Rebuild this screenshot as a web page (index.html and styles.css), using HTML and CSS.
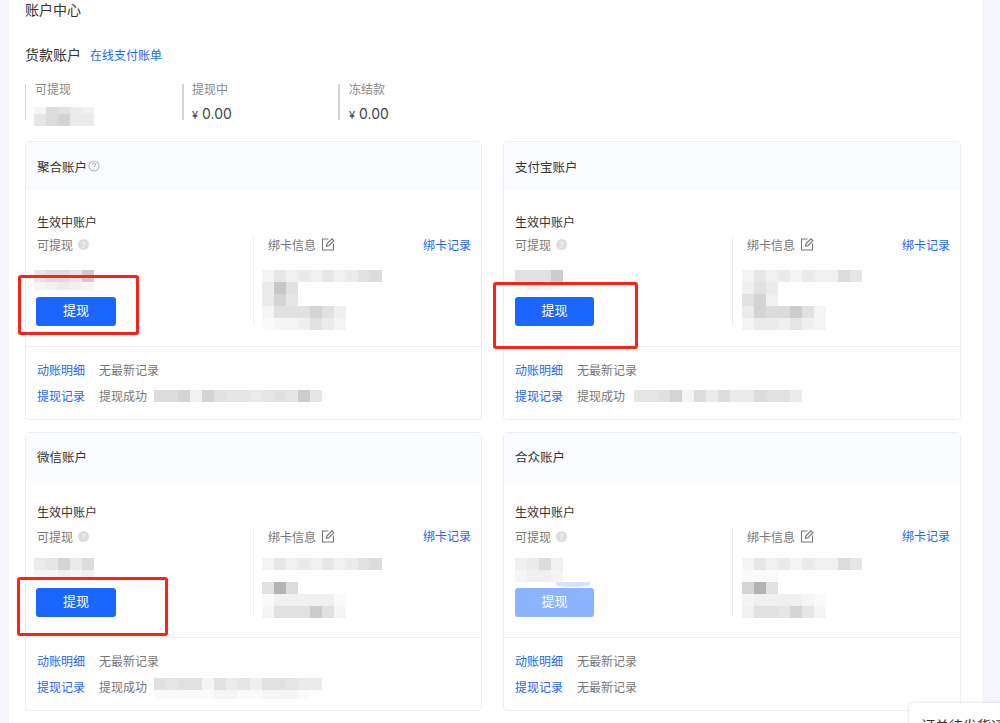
FILE: index.html
```html
<!DOCTYPE html>
<html lang="zh-CN">
<head>
<meta charset="utf-8">
<title>账户中心</title>
<link rel="stylesheet" href="styles.css">
</head>
<body>
<main class="page">
  <h1 class="page-title">账户中心</h1>
  <div class="section-head"><span class="section-title">货款账户</span><a class="link">在线支付账单</a></div>
  <div class="summary">
    <div class="stat stat-first"><div class="stat-label">可提现</div><div class="mosaic stat-mosaic"><div class="row r7"><i class="g1"></i><i class="g6"></i><i class="g5"></i><i class="g3"></i><i class="g2"></i></div><div class="row r12"><i class="g4"></i><i class="g6"></i><i class="g7"></i><i class="g3"></i><i class="g3"></i></div></div></div>
    <div class="stat stat-second"><div class="stat-label">提现中</div><div class="stat-value"><small>¥</small> 0.00</div></div>
    <div class="stat stat-third"><div class="stat-label">冻结款</div><div class="stat-value"><small>¥</small> 0.00</div></div>
  </div>
  <div class="cards">
    <section class="card">
      <header class="card-head">聚合账户<svg class="help-outline" viewBox="0 0 12 12"><circle cx="6" cy="6" r="5" /><path d="M4.4 4.7a1.6 1.6 0 1 1 2.4 1.4c-.5.3-.8.6-.8 1.2M6 8.4v1" /></svg></header>
      <div class="card-body">
        <div class="card-sub">生效中账户</div>
        <div class="card-cols">
          <div class="col-left">
            <div class="label-row">可提现<span class="help-dot">?</span></div>
            <div class="mosaic amount"><div class="row r12"><i class="g4"></i><i class="g6"></i><i class="g6"></i><i class="g4"></i><i class="g8"></i></div><div class="row r8"><i class="g1"></i><i class="g2"></i><i class="g3"></i><i class="g2"></i><i class="g1"></i></div></div>
            <button class="btn">提现</button>
          </div>
          <div class="col-right">
            <div class="bank-head"><span class="label-row">绑卡信息<svg class="edit" viewBox="0 0 14 14"><path d="M7.5 2H1.5v11h11V6.5M5.5 9.2l.5-2.4L11 1.8l1.9 1.9-5 5z"/></svg></span><a class="link">绑卡记录</a></div>
            <div class="mosaic bank">
              <div class="row r12"><i class="g1"></i><i class="g4"></i><i class="g2"></i><i class="g3"></i><i class="g2"></i><i class="g4"></i><i class="g2"></i><i class="g3"></i><i class="g5"></i><i class="g6"></i></div>
              <div class="row r12"><i class="g3"></i><i class="g9"></i><i class="g5"></i></div>
              <div class="row r12"><i class="g3"></i><i class="g7"></i><i class="g4"></i></div>
              <div class="row r12"><i class="g1"></i><i class="g5"></i><i class="g5"></i><i class="g5"></i><i class="g7"></i><i class="g5"></i><i class="g2"></i></div>
              <div class="row r12"><i class="g0"></i><i class="g1"></i><i class="g1"></i><i class="g2"></i><i class="g5"></i><i class="g3"></i><i class="g1"></i></div>
            </div>
          </div>
        </div>
      </div>
      <footer class="card-foot">
        <div class="foot-row"><a class="link">动账明细</a><span>无最新记录</span></div>
        <div class="foot-row"><a class="link">提现记录</a><span>提现成功</span><div class="mosaic foot-mosaic"><div class="row r12"><i class="g6"></i><i class="g6"></i><i class="g7"></i><i class="g2"></i><i class="g7"></i><i class="g5"></i><i class="g4"></i><i class="g4"></i><i class="g3"></i><i class="g4"></i><i class="g5"></i><i class="g4"></i><i class="g8"></i><i class="g4"></i></div></div></div>
      </footer>
    </section>
    <section class="card">
      <header class="card-head">支付宝账户</header>
      <div class="card-body">
        <div class="card-sub">生效中账户</div>
        <div class="card-cols">
          <div class="col-left">
            <div class="label-row">可提现<span class="help-dot">?</span></div>
            <div class="mosaic amount"><div class="row r12"><i class="g5"></i><i class="g5"></i><i class="g5"></i><i class="g8"></i></div><div class="row r8"><i class="n"></i><i class="g2"></i><i class="g1"></i><i class="g0"></i></div></div>
            <button class="btn">提现</button>
          </div>
          <div class="col-right">
            <div class="bank-head"><span class="label-row">绑卡信息<svg class="edit" viewBox="0 0 14 14"><path d="M7.5 2H1.5v11h11V6.5M5.5 9.2l.5-2.4L11 1.8l1.9 1.9-5 5z"/></svg></span><a class="link">绑卡记录</a></div>
            <div class="mosaic bank">
              <div class="row r12"><i class="g1"></i><i class="g4"></i><i class="g2"></i><i class="g3"></i><i class="g1"></i><i class="g3"></i><i class="g2"></i><i class="g2"></i><i class="g6"></i><i class="g4"></i></div>
              <div class="row r12"><i class="g2"></i><i class="g5"></i><i class="g3"></i></div>
              <div class="row r12"><i class="g5"></i><i class="g7"></i><i class="g2"></i></div>
              <div class="row r12"><i class="g3"></i><i class="g7"></i><i class="g6"></i><i class="g6"></i><i class="g8"></i><i class="g5"></i><i class="g1"></i></div>
              <div class="row r12"><i class="g1"></i><i class="g3"></i><i class="g3"></i><i class="g2"></i><i class="g4"></i><i class="g2"></i><i class="g1"></i></div>
            </div>
          </div>
        </div>
      </div>
      <footer class="card-foot">
        <div class="foot-row"><a class="link">动账明细</a><span>无最新记录</span></div>
        <div class="foot-row"><a class="link">提现记录</a><span>提现成功</span><div class="mosaic foot-mosaic"><div class="row r12"><i class="g4"></i><i class="g4"></i><i class="g5"></i><i class="g7"></i><i class="g1"></i><i class="g6"></i><i class="g3"></i><i class="g6"></i><i class="g3"></i><i class="g3"></i><i class="g6"></i><i class="g5"></i><i class="g5"></i><i class="g3"></i></div></div></div>
      </footer>
    </section>
    <section class="card">
      <header class="card-head">微信账户</header>
      <div class="card-body">
        <div class="card-sub">生效中账户</div>
        <div class="card-cols">
          <div class="col-left">
            <div class="label-row">可提现<span class="help-dot">?</span></div>
            <div class="mosaic amount amount-up"><div class="row r12"><i class="g3"></i><i class="g4"></i><i class="g7"></i><i class="g3"></i><i class="g6"></i></div><div class="row r8"><i class="g1"></i><i class="g1"></i><i class="g2"></i><i class="g1"></i><i class="g2"></i></div></div>
            <button class="btn">提现</button>
          </div>
          <div class="col-right">
            <div class="bank-head"><span class="label-row">绑卡信息<svg class="edit" viewBox="0 0 14 14"><path d="M7.5 2H1.5v11h11V6.5M5.5 9.2l.5-2.4L11 1.8l1.9 1.9-5 5z"/></svg></span><a class="link">绑卡记录</a></div>
            <div class="mosaic bank bank-up">
              <div class="row r12"><i class="g1"></i><i class="g4"></i><i class="g2"></i><i class="g3"></i><i class="g2"></i><i class="g4"></i><i class="g2"></i><i class="g3"></i><i class="g5"></i><i class="g6"></i></div>
              <div class="row r12"><i class="n"></i></div>
              <div class="row r12"><i class="g5"></i><i class="g10"></i><i class="g6"></i></div>
              <div class="row r12"><i class="g0"></i><i class="g2"></i><i class="g2"></i><i class="g2"></i><i class="g2"></i><i class="g2"></i><i class="g0"></i></div>
              <div class="row r12"><i class="g1"></i><i class="g5"></i><i class="g5"></i><i class="g5"></i><i class="g8"></i><i class="g5"></i><i class="g1"></i></div>
            </div>
          </div>
        </div>
      </div>
      <footer class="card-foot">
        <div class="foot-row"><a class="link">动账明细</a><span>无最新记录</span></div>
        <div class="foot-row"><a class="link">提现记录</a><span>提现成功</span><div class="mosaic foot-mosaic foot-tall"><div class="row r12"><i class="g5"></i><i class="g4"></i><i class="g5"></i><i class="g5"></i><i class="g1"></i><i class="g5"></i><i class="g3"></i><i class="g4"></i><i class="g2"></i><i class="g5"></i><i class="g5"></i><i class="g4"></i><i class="g3"></i><i class="g3"></i></div><div class="row r9"><i class="g0"></i><i class="g0"></i><i class="g0"></i><i class="g0"></i><i class="g0"></i><i class="g1"></i><i class="g1"></i><i class="g0"></i><i class="g0"></i><i class="g1"></i><i class="g1"></i><i class="g1"></i><i class="g0"></i></div></div></div>
      </footer>
    </section>
    <section class="card">
      <header class="card-head">合众账户</header>
      <div class="card-body">
        <div class="card-sub">生效中账户</div>
        <div class="card-cols">
          <div class="col-left">
            <div class="label-row">可提现<span class="help-dot">?</span></div>
            <div class="mosaic amount amount-up amount-smear"><div class="row r12"><i class="g2"></i><i class="g3"></i><i class="g6"></i><i class="g2"></i></div><div class="row r12"><i class="g1"></i><i class="g2"></i><i class="g2"></i><i class="g1"></i></div></div>
            <button class="btn btn-disabled">提现</button>
          </div>
          <div class="col-right">
            <div class="bank-head"><span class="label-row">绑卡信息<svg class="edit" viewBox="0 0 14 14"><path d="M7.5 2H1.5v11h11V6.5M5.5 9.2l.5-2.4L11 1.8l1.9 1.9-5 5z"/></svg></span><a class="link">绑卡记录</a></div>
            <div class="mosaic bank bank-up">
              <div class="row r12"><i class="g1"></i><i class="g4"></i><i class="g2"></i><i class="g3"></i><i class="g1"></i><i class="g3"></i><i class="g2"></i><i class="g2"></i><i class="g6"></i><i class="g4"></i></div>
              <div class="row r12"><i class="g0"></i><i class="g0"></i><i class="g0"></i></div>
              <div class="row r12"><i class="g7"></i><i class="g10"></i><i class="g5"></i></div>
              <div class="row r12"><i class="g1"></i><i class="g2"></i><i class="g2"></i><i class="g2"></i><i class="g2"></i><i class="g1"></i><i class="g0"></i></div>
              <div class="row r12"><i class="g2"></i><i class="g5"></i><i class="g5"></i><i class="g4"></i><i class="g7"></i><i class="g4"></i><i class="g1"></i></div>
            </div>
          </div>
        </div>
      </div>
      <footer class="card-foot">
        <div class="foot-row"><a class="link">动账明细</a><span>无最新记录</span></div>
        <div class="foot-row"><a class="link">提现记录</a><span>无最新记录</span></div>
      </footer>
    </section>
  </div>
</main>
<div class="note note-a"></div>
<div class="note note-b"></div>
<div class="note note-c"></div>
<aside class="toast">订单待发货通知</aside>
</body>
</html>
```

FILE: styles.css
```css
* { box-sizing: border-box; }
html, body { margin: 0; height: 723px; overflow: hidden; }
body {
  position: relative;
  background: #f5f6fb;
  font-family: "Noto Sans CJK SC", "Liberation Sans", sans-serif;
  font-size: 12px;
  color: #666;
}
.page {
  margin-left: 9px;
  width: 973px;
  height: 723px;
  background: #fff;
  padding: 0 21px 0 16px;
  overflow: hidden;
}
.page-title {
  margin: 0;
  height: 18px;
  font-size: 14px;
  line-height: 18px;
  font-weight: 400;
  color: #333;
}
.section-head {
  display: flex;
  align-items: center;
  gap: 9px;
  margin-top: 25px;
  height: 22px;
}
.section-title { font-size: 14px; color: #333; }
.link { color: #1a66ff; font-size: 12px; }
.summary { display: flex; margin-top: 19px; height: 36px; }
.stat {
  width: 157px;
  padding-left: 8px;
  border-left: 2px solid #d4d4d4;
  line-height: 18px;
}
.stat-first { border-left: 1px solid #d8d8d8; padding-left: 9px; }
.stat-second { width: 156px; }
.stat-third { padding-left: 9px; }
.stat-label { color: #888; height: 18px; margin-top: -4px; }
.stat-value { font-size: 14px; line-height: 22px; color: #444; font-family: "Inter", "Liberation Sans", sans-serif; margin-top: 5px; }
.stat-value small { font-size: 11px; }
.cards {
  display: grid;
  grid-template-columns: 457px 458px;
  column-gap: 21px;
  row-gap: 12px;
  margin-top: 21px;
}
.card {
  height: 279px;
  border: 1px solid #eceef3;
  border-radius: 4px;
  background: #fff;
  display: flex;
  flex-direction: column;
}
.card-head {
  display: flex;
  align-items: center;
  height: 48px;
  padding-left: 11px;
  background: #fafbfe;
  font-size: 12.5px;
  color: #333;
}
.card:nth-child(n+3) .card-head { padding-bottom: 2px; }
.help-outline { width: 12px; height: 12px; margin-left: 1px; fill: none; stroke: #bbb; stroke-width: 1.2; }
.card-body { height: 157px; padding: 23px 10px 0 11px; border-bottom: 1px solid #eceef1; }
.card:nth-child(n+3) .card-body { padding-top: 22px; }
.card-sub { height: 18px; line-height: 18px; color: #333; }
.card-cols { display: flex; margin-top: 5px; }
.card:nth-child(n+3) .card-cols { margin-top: 6px; }
.col-left { width: 216px; }
.card:nth-child(even) .col-left { width: 217px; }
.label-row { display: flex; align-items: center; height: 16px; color: #777; }
.card:nth-child(n+3) .label-row { padding-top: 2px; }
.help-dot {
  display: inline-flex;
  align-items: center;
  justify-content: center;
  width: 11px;
  height: 11px;
  margin-left: 5px;
  border-radius: 50%;
  background: #dcdde0;
  color: #fff;
  font-size: 8px;
}
.mosaic { display: flex; flex-direction: column; }
.row { display: flex; }
.row i { display: block; width: 12px; height: 100%; flex: none; }
.r7 { height: 7px; }
.r8 { height: 8px; }
.r9 { height: 9px; }
.r12 { height: 12px; }
.n { background: transparent; }
.g0 { background: #fafafa; }
.g1 { background: #f5f5f5; }
.g2 { background: #f0f0f0; }
.g3 { background: #ebebeb; }
.g4 { background: #e6e6e6; }
.g5 { background: #e1e1e1; }
.g6 { background: #dcdcdc; }
.g7 { background: #d4d4d4; }
.g8 { background: #cccccc; }
.g9 { background: #c9c6c9; }
.g10 { background: #b4b3b3; }
.stat-mosaic { margin: 9px 0 0 -1px; }
.amount { margin: 18px 0 0 -3px; height: 27px; }
.amount-up { margin-top: 15px; height: 30px; }
.amount-smear { position: relative; }
.amount-smear::after {
  content: "";
  position: absolute;
  left: 41px;
  top: 24px;
  width: 34px;
  height: 5px;
  background: #d2e2ff;
  border-radius: 0 0 60% 60%;
}
.card:nth-child(even) .amount { margin-left: 0; }
.btn {
  display: block;
  width: 80px;
  height: 29px;
  margin: 0 0 0 -1px;
  padding: 0 0 4px;
  border: 0;
  border-radius: 3px;
  background: #1a66ff;
  color: #fff;
  font-family: inherit;
  font-size: 13px;
}
.card:nth-child(even) .btn { margin-left: 0; width: 79px; }
.btn-disabled { background: #8cb3ff; }
.col-right {
  flex: 1;
  height: 90px;
  padding: 0 0 0 14px;
  border-left: 1px solid #eceef1;
}
.bank-head { display: flex; justify-content: space-between; align-items: center; height: 16px; }
.edit { width: 14px; height: 14px; margin-left: 5px; fill: none; stroke: #777; stroke-width: 1.1; }
.bank { margin: 18px 0 0 -6px; }
.bank-up { margin-top: 15px; }
.card:nth-child(even) .bank { margin-left: -5px; }
.card-foot { flex: 1; padding: 13px 0 0 11px; }
.foot-row { display: flex; align-items: center; height: 18px; margin-bottom: 8px; }
.foot-row span { margin-left: 14px; color: #777; }
.foot-mosaic { margin: 2px 0 0 7px; }
.card:nth-child(even) .foot-mosaic { margin-left: 9px; }
.foot-tall { align-self: flex-start; margin-top: 1px; }
.note {
  position: absolute;
  border: 3px solid #ff2016;
  border-radius: 3px;
}
.note-a { left: 18px; top: 275px; width: 121px; height: 60px; }
.note-b { left: 493px; top: 282px; width: 145px; height: 67px; }
.note-c { left: 17px; top: 577px; width: 151px; height: 59px; }
.toast {
  position: absolute;
  left: 909px;
  top: 703px;
  width: 120px;
  height: 60px;
  padding: 12px 0 0 12px;
  background: #fff;
  border-radius: 4px;
  box-shadow: 0 0 3px rgba(0,0,0,.18);
  color: #333;
  font-size: 14px;
  line-height: 20px;
  white-space: nowrap;
}
```
